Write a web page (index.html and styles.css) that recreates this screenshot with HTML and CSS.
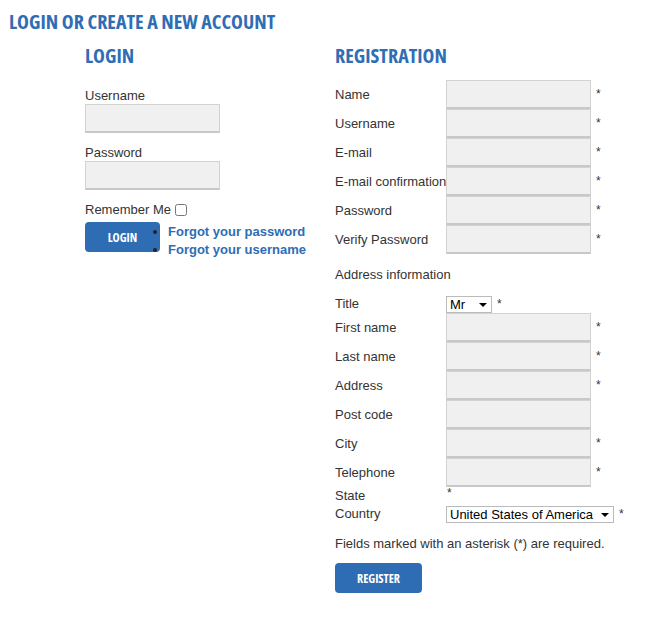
FILE: index.html
```html
<!DOCTYPE html>
<html lang="en">
<head>
    <meta charset="UTF-8">
    <title>Login or create a new account</title>
    <link rel="stylesheet" href="styles.css">
</head>
<body>

<h1 class="page-title">Login or create a new account</h1>

<div class="columns">
    <div class="login-box">
        <h2>Login</h2>
        <label class="field-label" for="login-user">Username</label>
        <input class="text-input" type="text" id="login-user">
        <label class="field-label" for="login-pass">Password</label>
        <input class="text-input" type="password" id="login-pass">
        <div class="remember">
            <label for="remember">Remember Me</label>
            <input type="checkbox" id="remember">
        </div>
        <div class="login-actions">
            <button class="blue-button login-button">Login</button>
            <ul class="login-links">
                <li><a href="#">Forgot your password</a></li>
                <li><a href="#">Forgot your username</a></li>
            </ul>
        </div>
    </div>

    <div class="register-box">
        <h2>Registration</h2>
        <div class="reg-grid">
            <label>Name</label><input class="text-input" type="text"><span class="req">*</span>
            <label>Username</label><input class="text-input" type="text"><span class="req">*</span>
            <label>E-mail</label><input class="text-input" type="text"><span class="req">*</span>
            <label>E-mail confirmation</label><input class="text-input" type="text"><span class="req">*</span>
            <label>Password</label><input class="text-input" type="password"><span class="req">*</span>
            <label>Verify Password</label><input class="text-input" type="password"><span class="req">*</span>
        </div>

        <div class="section-title">Address information</div>

        <div class="reg-grid">
            <label class="short-row">Title</label>
            <div class="short-row select-cell">
                <span class="select-wrap"><select class="small-select title-select"><option>Mr</option><option>Mrs</option><option>Ms</option></select></span>
                <span class="req">*</span>
            </div>
            <span></span>
            <label>First name</label><input class="text-input" type="text"><span class="req">*</span>
            <label>Last name</label><input class="text-input" type="text"><span class="req">*</span>
            <label>Address</label><input class="text-input" type="text"><span class="req">*</span>
            <label>Post code</label><input class="text-input" type="text"><span></span>
            <label>City</label><input class="text-input" type="text"><span class="req">*</span>
            <label>Telephone</label><input class="text-input" type="text"><span class="req">*</span>
            <label class="state-row">State</label><span class="state-row state-req">*</span><span></span>
            <label class="short-row">Country</label>
            <div class="short-row select-cell">
                <span class="select-wrap"><select class="small-select country-select"><option>United States of America</option></select></span>
                <span class="req">*</span>
            </div>
            <span></span>
        </div>

        <p class="required-note">Fields marked with an asterisk (*) are required.</p>
        <button class="blue-button register-button">Register</button>
    </div>
</div>

</body>
</html>
```

FILE: styles.css
```css
body {
    margin: 0;
    padding: 10px 9px;
    font-family: "Liberation Sans", Arial, sans-serif;
    font-size: 13px;
    color: #333;
    background-color: #fff;
}
h1, h2 {
    font-family: "Open Sans", "Liberation Sans", sans-serif;
    font-stretch: 75%;
    font-weight: bold;
    text-transform: uppercase;
    color: #2f6db4;
    margin: 0;
}
.page-title {
    font-size: 20px;
    line-height: 24px;
}
h2 {
    font-size: 20px;
    line-height: 24px;
    margin-top: 10px;
    margin-bottom: 20px;
}
.register-box h2 {
    margin-bottom: 12px;
}
.columns {
    display: flex;
    padding-left: 76px;
}
.login-box {
    width: 250px;
    display: flex;
    flex-direction: column;
    align-items: flex-start;
}
.field-label {
    display: block;
    line-height: 16px;
}
.text-input {
    display: block;
    box-sizing: border-box;
    margin: 0;
    width: 135px;
    height: 29px;
    border: 1px solid #d3d3d3;
    border-bottom: 2px solid #c8c8c8;
    background-color: #f0f0f0;
    font-size: 13px;
}
.login-box .text-input {
    margin-bottom: 12px;
}
.remember {
    display: flex;
    align-items: center;
    line-height: 16px;
}
.remember input {
    margin: 0 0 0 4px;
    width: 12px;
    height: 12px;
}
.login-actions {
    display: flex;
    margin-top: 4px;
}
.blue-button {
    font-family: "Open Sans", "Liberation Sans", sans-serif;
    font-stretch: 75%;
    font-weight: bold;
    font-size: 12px;
    text-transform: uppercase;
    color: #fff;
    background-color: #2e6db4;
    border: none;
    border-radius: 4px;
    height: 30px;
    cursor: pointer;
}
.login-button {
    width: 75px;
}
.login-links {
    margin: 1px 0 0 8px;
    padding: 0;
    line-height: 18px;
    list-style: disc;
}
.login-links li::marker {
    color: #222;
}
.login-links a {
    font-weight: bold;
    color: #2e6db4;
    text-decoration: none;
}
.register-box {
    flex: 1;
}
.reg-grid {
    display: grid;
    grid-template-columns: 111px 145px auto;
    align-items: center;
}
.reg-grid label {
    white-space: nowrap;
}
.reg-grid .text-input {
    width: 145px;
}
.req {
    align-self: start;
    margin-left: 5px;
    line-height: 28px;
    font-size: 12px;
}
.section-title {
    padding: 13px 0 12px;
    line-height: 16px;
}
.short-row {
    height: 18px;
    line-height: 18px;
}
.select-cell {
    display: flex;
    align-items: center;
}
.select-cell .req {
    align-self: center;
    line-height: 18px;
}
.select-wrap {
    position: relative;
    display: inline-block;
}
.select-wrap::after {
    content: "";
    position: absolute;
    right: 5px;
    top: 7px;
    border-left: 4px solid transparent;
    border-right: 4px solid transparent;
    border-top: 4px solid #000;
    pointer-events: none;
}
.small-select {
    appearance: none;
    -webkit-appearance: none;
    display: block;
    box-sizing: border-box;
    height: 17px;
    margin: 0;
    padding: 0 14px 0 3px;
    border: 1px solid #bbb;
    border-radius: 0;
    background-color: #fff;
    font-family: "Liberation Sans", Arial, sans-serif;
    font-size: 13px;
    line-height: 15px;
    color: #000;
}
.title-select {
    width: 46px;
}
.country-select {
    width: 168px;
}
.state-row {
    height: 18px;
    line-height: 18px;
}
.state-req {
    line-height: 12px;
    font-size: 12px;
    padding-left: 1px;
}
.required-note {
    margin: 13px 0 11px;
    line-height: 16px;
}
.register-button {
    width: 87px;
}
```
